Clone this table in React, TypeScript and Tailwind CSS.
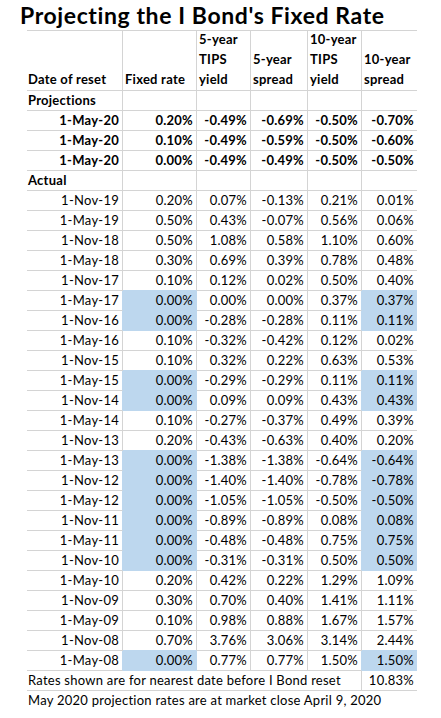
type Row = {
  date: string;
  vals: string[];
  hl?: boolean;
  bold?: boolean;
  label?: boolean;
};

const projections: Row[] = [
  { date: "1-May-20", vals: ["0.20%", "-0.49%", "-0.69%", "-0.50%", "-0.70%"], bold: true },
  { date: "1-May-20", vals: ["0.10%", "-0.49%", "-0.59%", "-0.50%", "-0.60%"], bold: true },
  { date: "1-May-20", vals: ["0.00%", "-0.49%", "-0.49%", "-0.50%", "-0.50%"], bold: true },
];

const actual: Row[] = [
  { date: "1-Nov-19", vals: ["0.20%", "0.07%", "-0.13%", "0.21%", "0.01%"] },
  { date: "1-May-19", vals: ["0.50%", "0.43%", "-0.07%", "0.56%", "0.06%"] },
  { date: "1-Nov-18", vals: ["0.50%", "1.08%", "0.58%", "1.10%", "0.60%"] },
  { date: "1-May-18", vals: ["0.30%", "0.69%", "0.39%", "0.78%", "0.48%"] },
  { date: "1-Nov-17", vals: ["0.10%", "0.12%", "0.02%", "0.50%", "0.40%"] },
  { date: "1-May-17", vals: ["0.00%", "0.00%", "0.00%", "0.37%", "0.37%"], hl: true },
  { date: "1-Nov-16", vals: ["0.00%", "-0.28%", "-0.28%", "0.11%", "0.11%"], hl: true },
  { date: "1-May-16", vals: ["0.10%", "-0.32%", "-0.42%", "0.12%", "0.02%"] },
  { date: "1-Nov-15", vals: ["0.10%", "0.32%", "0.22%", "0.63%", "0.53%"] },
  { date: "1-May-15", vals: ["0.00%", "-0.29%", "-0.29%", "0.11%", "0.11%"], hl: true },
  { date: "1-Nov-14", vals: ["0.00%", "0.09%", "0.09%", "0.43%", "0.43%"], hl: true },
  { date: "1-May-14", vals: ["0.10%", "-0.27%", "-0.37%", "0.49%", "0.39%"] },
  { date: "1-Nov-13", vals: ["0.20%", "-0.43%", "-0.63%", "0.40%", "0.20%"] },
  { date: "1-May-13", vals: ["0.00%", "-1.38%", "-1.38%", "-0.64%", "-0.64%"], hl: true },
  { date: "1-Nov-12", vals: ["0.00%", "-1.40%", "-1.40%", "-0.78%", "-0.78%"], hl: true },
  { date: "1-May-12", vals: ["0.00%", "-1.05%", "-1.05%", "-0.50%", "-0.50%"], hl: true },
  { date: "1-Nov-11", vals: ["0.00%", "-0.89%", "-0.89%", "0.08%", "0.08%"], hl: true },
  { date: "1-May-11", vals: ["0.00%", "-0.48%", "-0.48%", "0.75%", "0.75%"], hl: true },
  { date: "1-Nov-10", vals: ["0.00%", "-0.31%", "-0.31%", "0.50%", "0.50%"], hl: true },
  { date: "1-May-10", vals: ["0.20%", "0.42%", "0.22%", "1.29%", "1.09%"] },
  { date: "1-Nov-09", vals: ["0.30%", "0.70%", "0.40%", "1.41%", "1.11%"] },
  { date: "1-May-09", vals: ["0.10%", "0.98%", "0.88%", "1.67%", "1.57%"] },
  { date: "1-Nov-08", vals: ["0.70%", "3.76%", "3.06%", "3.14%", "2.44%"] },
  { date: "1-May-08", vals: ["0.00%", "0.77%", "0.77%", "1.50%", "1.50%"], hl: true },
];

const rows: Row[] = [
  { date: "Projections", vals: ["", "", "", "", ""], label: true },
  ...projections,
  { date: "Actual", vals: ["", "", "", "", ""], label: true },
  ...actual,
];

// filled = highlighted row, in the Fixed rate or 10-year spread column
const filled = (r: number, c: number) => !!rows[r]?.hl && (c === 1 || c === 5);

const Cell = ({ r, c, text, bold, left }: { r: number; c: number; text: string; bold?: boolean; left?: boolean }) => {
  const fill = filled(r, c);
  const rightBlue = fill || filled(r, c + 1);
  const bottomBlue = fill || filled(r + 1, c);
  return (
    <div
      className={[
        "h-[20px] leading-[19px] whitespace-nowrap border-b",
        c < 5 ? "border-r" : "",
        c < 5 ? (rightBlue ? "border-r-[#bdd7ee]" : "border-r-[#d4d4d4]") : "",
        bottomBlue ? "border-b-[#bdd7ee]" : "border-b-[#d4d4d4]",
        fill ? "bg-[#bdd7ee]" : "",
        left ? "text-left pl-[1px]" : "text-right pr-[3px]",
        bold ? "font-bold" : "",
      ].join(" ")}
    >
      {text}
    </div>
  );
};

const headers = ["Date of reset", "Fixed rate", "5-year TIPS yield", "5-year spread", "10-year TIPS yield", "10-year spread"];

export default function App() {
  return (
    <div className="w-[441px] h-[718px] bg-white text-black font-['Lato',sans-serif] text-[13px] tracking-[0.25px] overflow-hidden">
      <div className="h-[30px] pl-[20px] pt-[1px] text-[23px] tracking-[0.6px] font-bold leading-[28px] whitespace-nowrap">
        Projecting the I Bond's Fixed Rate
      </div>

      <div className="ml-[27px] w-[390px]">
        <div className="grid grid-cols-[96px_74px_54px_57px_54px_55px] border-t border-t-[#d4d4d4]">
          {headers.map((h, i) => (
            <div
              key={h}
              className={`h-[60px] flex items-end font-bold leading-[20px] border-b border-b-[#d4d4d4] ${
                i < 5 ? "border-r border-r-[#d4d4d4]" : ""
              } ${i === 0 ? "pl-[1px]" : "pl-[2px]"}`}
            >
              <span className="pb-[1px]">{h}</span>
            </div>
          ))}
        </div>

        {rows.map((row, r) => (
          <div key={r} className="grid grid-cols-[96px_74px_54px_57px_54px_55px]">
            <Cell r={r} c={0} text={row.date} bold={row.bold || row.label} left={row.label} />
            {row.vals.map((v, i) => (
              <Cell key={i} r={r} c={i + 1} text={v} bold={row.bold} />
            ))}
          </div>
        ))}

        <div className="grid grid-cols-[335px_55px]">
          <div className="h-[20px] leading-[19px] pl-[1px] whitespace-nowrap border-b border-b-[#d4d4d4] border-r border-r-[#d4d4d4]">
            Rates shown are for nearest date before I Bond reset
          </div>
          <div className="h-[20px] leading-[19px] pr-[3px] text-right border-b border-b-[#d4d4d4]">10.83%</div>
        </div>
        <div className="h-[20px] leading-[19px] pl-[1px] whitespace-nowrap">
          May 2020 projection rates are at market close April 9, 2020
        </div>
      </div>
    </div>
  );
}
